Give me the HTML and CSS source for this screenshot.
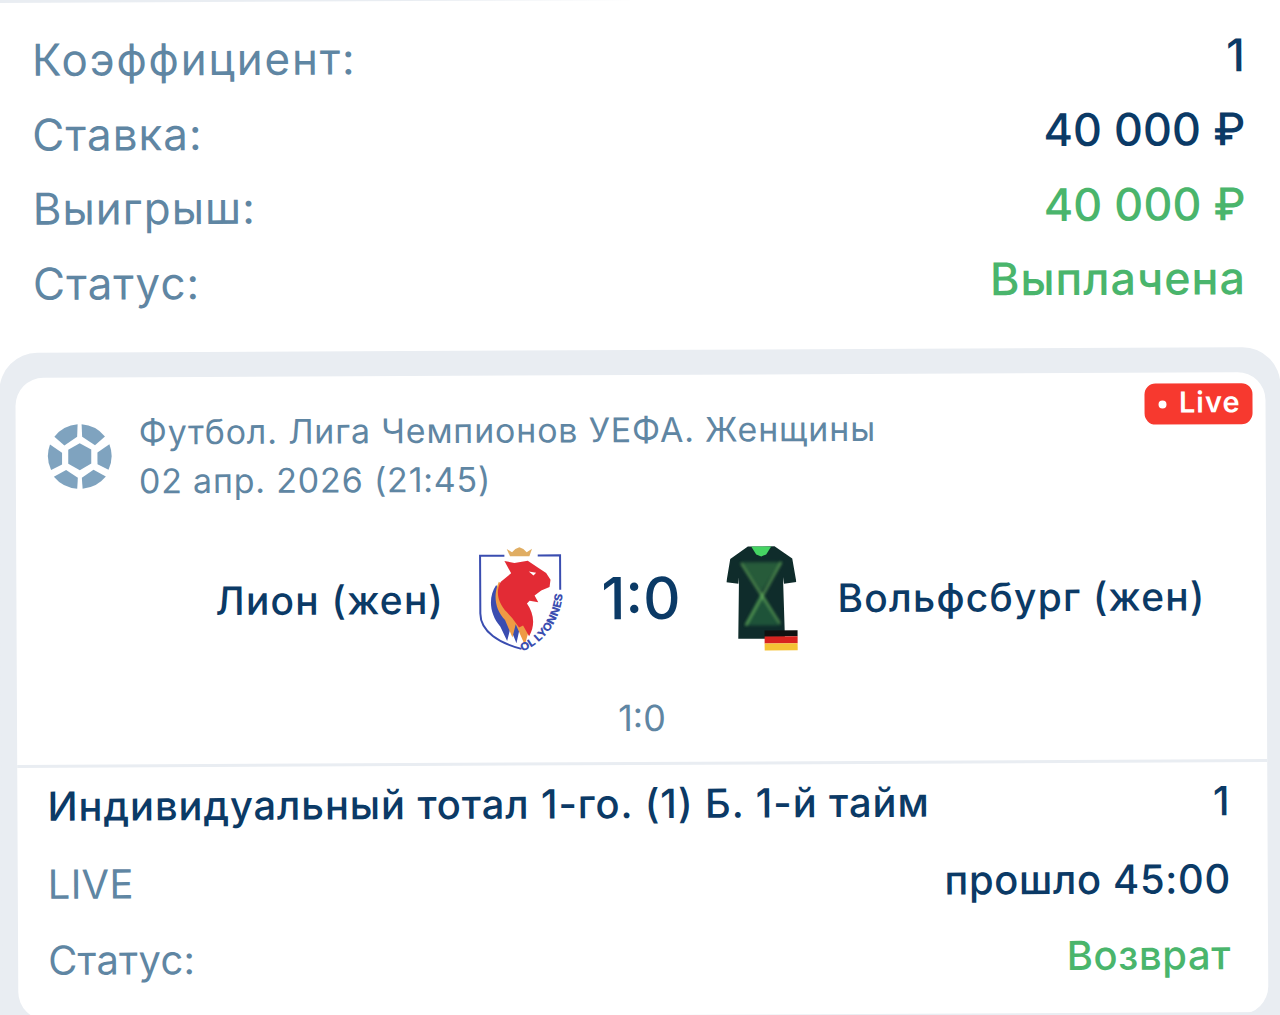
FILE: index.html
```html
<!DOCTYPE html>
<html lang="ru">
<head>
    <meta charset="UTF-8">
    <title>Купон</title>
    <link rel="stylesheet" href="styles.css">
</head>
<body>

    <div class="page">
        <!-- Summary -->
        <section class="summary">
            <div class="summary-row"><span class="summary-label wide">Коэффициент:</span><span class="summary-value">1</span></div>
            <div class="summary-row"><span class="summary-label">Ставка:</span><span class="summary-value">40 000 ₽</span></div>
            <div class="summary-row"><span class="summary-label">Выигрыш:</span><span class="summary-value green">40 000 ₽</span></div>
            <div class="summary-row"><span class="summary-label">Статус:</span><span class="summary-value green paid">Выплачена</span></div>
        </section>

        <!-- Event card -->
        <section class="card-wrap">
            <div class="card">
                <span class="live-badge"><i class="live-dot"></i>Live</span>

                <div class="event-head">
                    <svg class="sport-icon" viewBox="0 0 66 66">
                        <polygon points="33,19.500 44.500,26 44.500,40 33,46.500 21.500,40 21.500,26" fill="#7fa3bf"/>
                        <path d="M31 .7 L30.500 13 L17.700 21.700 L7.700 13 A33 33 0 0 1 31 .7 Z" fill="#7fa3bf"/>
                        <path d="M35 .7 L35.500 13 L48.300 21.700 L58.300 13 A33 33 0 0 0 35 .7 Z" fill="#7fa3bf"/>
                        <path d="M3.300 20.700 L15.300 29 L15.300 40.700 L4.300 46.300 A33 33 0 0 1 3.300 20.700 Z" fill="#7fa3bf"/>
                        <path d="M62.700 20.700 L50.700 29 L50.700 40.700 L61.700 46.300 A33 33 0 0 0 62.700 20.700 Z" fill="#7fa3bf"/>
                        <path d="M19.300 46.300 L31 54 L30.300 65 A33 33 0 0 1 7 53 Z" fill="#7fa3bf"/>
                        <path d="M46.700 46.300 L35 54 L35.700 65 A33 33 0 0 0 59 53 Z" fill="#7fa3bf"/>
                    </svg>
                    <div class="event-info">
                        <div>Футбол. Лига Чемпионов УЕФА. Женщины</div>
                        <div>02 апр. 2026 (21:45)</div>
                    </div>
                </div>

                <div class="match">
                    <div class="team team-home">Лион (жен)</div>
                    <svg class="crest" viewBox="30 25 245 315">
                        <polygon points="112,32 128,42 138,32 150,27 162,32 172,42 188,32 180,54 122,54" fill="#e0ad62"/>
                        <path d="M105 52 H32 V225 C32 280 90 315 155 332" fill="none" stroke="#3a4db0" stroke-width="6"/>
                        <path d="M205 52 H272 V155" fill="none" stroke="#3a4db0" stroke-width="6"/>
                        <path d="M80 140 C56 175 58 225 92 265 L112 308 L122 270 L140 315 L150 270 Z" fill="#3a4db0"/>
                        <path d="M88 130 C70 170 76 215 106 245 L128 298 L138 258 L165 320 L178 275 L150 180 Z" fill="#ee9a45"/>
                        <path d="M105 68 L135 74 L175 68 L205 88 L230 105 L243 125 L240 147 L215 157 L195 172 L206 192 L180 188 L172 196 C192 225 198 260 178 294 L160 262 L148 268 L128 240 L112 222 C86 195 76 160 94 130 L125 105 Z" fill="#e32b35"/>
                        <polygon points="178,100 200,104 192,112" fill="#fff"/>
                        <path id="crestCurve" d="M158 340 C228 312 276 242 280 160" fill="none"/>
                        <text class="crest-text"><textPath href="#crestCurve" textLength="222" lengthAdjust="spacingAndGlyphs">OL LYONNES</textPath></text>
                    </svg>
                    <div class="score">1:0</div>
                    <div class="shirt-box">
                        <svg class="shirt" viewBox="30 15 210 285">
                            <defs>
                                <filter id="shirtBlur"><feGaussianBlur stdDeviation="4"/></filter>
                                <clipPath id="shirtClip">
                                    <path d="M95 18 L175 18 L228 55 L240 125 L203 130 L200 110 L205 295 L65 295 L68 110 L66 130 L30 125 L42 55 Z"/>
                                </clipPath>
                            </defs>
                            <path d="M95 18 L175 18 L228 55 L240 125 L203 130 L200 110 L205 295 L65 295 L68 110 L66 130 L30 125 L42 55 Z" fill="#0f2c2b"/>
                            <g clip-path="url(#shirtClip)">
                                <polygon points="75,65 195,65 135,155" fill="#3f8a4c" opacity="0.500" filter="url(#shirtBlur)"/>
                                <polygon points="135,155 85,255 190,255" fill="#2f7a48" opacity="0.500" filter="url(#shirtBlur)"/>
                                <path d="M75 68 L190 250 M195 65 L88 255" stroke="#7fcf66" stroke-width="5" opacity="0.850" filter="url(#shirtBlur)"/>
                            </g>
                            <polygon points="105,18 165,18 150,42 135,48 120,42" fill="#45d463"/>
                        </svg>
                        <div class="flag"><span class="flag-black"></span><span class="flag-red"></span><span class="flag-gold"></span></div>
                    </div>
                    <div class="team team-away">Вольфсбург (жен)</div>
                </div>

                <div class="period-score">1:0</div>

                <div class="bet">
                    <div class="bet-row bet-first">
                        <span class="bet-title">Индивидуальный тотал 1-го. (1) Б. 1-й тайм</span>
                        <span class="bet-title">1</span>
                    </div>
                    <div class="bet-row bet-second">
                        <span class="bet-label">LIVE</span>
                        <span class="bet-time">прошло 45:00</span>
                    </div>
                    <div class="bet-row bet-third">
                        <span class="bet-label">Статус:</span>
                        <span class="bet-status">Возврат</span>
                    </div>
                </div>
            </div>
        </section>
    </div>

</body>
</html>
```

FILE: styles.css
```css
/* Base Reset */
* {
    margin: 0;
    padding: 0;
    box-sizing: border-box;
    font-family: 'Inter', 'Noto Sans', sans-serif;
}

body {
    background-color: #e9edf2;
    width: 1280px;
    height: 1015px;
    overflow: hidden;
}

/* The shot is a slightly tilted phone photo */
.page {
    background: linear-gradient(#fff 400px, #e9edf2 400px);
    margin: 0 -8px;
    height: 1015px;
    transform: rotate(-0.27deg);
}

/* Summary */
.summary {
    padding: 20px 41px 0 42px;
    height: 350px;
}

.summary-row {
    display: flex;
    justify-content: space-between;
    align-items: center;
    height: 74.500px;
}

.summary-label {
    font-size: 44px;
    letter-spacing: 1px;
    color: #5f86a3;
}

.summary-label.wide {
    letter-spacing: 1.800px;
}

.summary-value {
    font-size: 45px;
    font-weight: 500;
    color: #0b3a66;
}

.summary-value.green {
    color: #4ab56c;
}

.summary-value.paid {
    letter-spacing: 0.900px;
}

/* Event card */
.card-wrap {
    background-color: #e9edf2;
    border-radius: 38px 38px 0 0;
    margin: 0 7px 0 8px;
    padding: 25px 15px 0 16px;
    height: 665px;
    overflow: hidden;
}

.card {
    position: relative;
    background-color: #fff;
    border-radius: 28px;
    height: 642px;
}

.live-badge {
    position: absolute;
    top: 11px;
    right: 13px;
    display: flex;
    align-items: center;
    background-color: #f7392f;
    color: #fff;
    font-size: 29px;
    font-weight: 600;
    letter-spacing: 1px;
    line-height: 37px;
    padding: 0 12px 4px 14px;
    border-radius: 11px;
}

.live-dot {
    width: 8px;
    height: 8px;
    margin: 4px 12px 0 0;
    border-radius: 50%;
    background-color: #fff;
}

.event-head {
    display: flex;
    align-items: center;
    gap: 26px;
    padding: 30px 0 0 31px;
}

.sport-icon {
    width: 66px;
    height: 66px;
}

.event-info {
    font-size: 34px;
    letter-spacing: 0.800px;
    line-height: 49px;
    color: #5f86a3;
}

/* Match */
.match {
    display: flex;
    align-items: center;
    margin-top: 40px;
    height: 110px;
}

.team {
    font-size: 39px;
    font-weight: 500;
    letter-spacing: 1.200px;
    color: #0b3a66;
    white-space: nowrap;
}

.team-home {
    margin-left: 199px;
    width: 264px;
}

.crest {
    width: 82px;
    height: 105px;
    overflow: visible;
}

.crest-text {
    font-size: 33px;
    font-weight: 800;
    fill: #3a4db0;
}

.score {
    font-size: 58px;
    font-weight: 500;
    color: #0b3a66;
    margin-left: 40px;
    width: 125px;
}

.shirt-box {
    position: relative;
    width: 70px;
    height: 95px;
    margin-bottom: 10px;
}

.shirt {
    width: 70px;
    height: 95px;
}

.flag {
    position: absolute;
    right: -1px;
    bottom: -10px;
    width: 33px;
    height: 20px;
    display: flex;
    flex-direction: column;
}

.flag span {
    flex: 1;
}

.flag-black {
    background-color: #111;
}

.flag-red {
    background-color: #d8231f;
}

.flag-gold {
    background-color: #f5c234;
}

.team-away {
    margin-left: 41px;
}

.period-score {
    text-align: center;
    font-size: 36px;
    color: #5f86a3;
    margin-top: 31px;
    height: 81px;
    line-height: 69px;
    border-bottom: 3px solid #e9edf2;
}

/* Bet details */
.bet {
    padding: 0 37px 0 30px;
}

.bet-row {
    display: flex;
    justify-content: space-between;
    align-items: center;
}

.bet-first {
    height: 77px;
}

.bet-second {
    height: 78px;
}

.bet-third {
    height: 75px;
}

.bet-title {
    font-size: 40px;
    font-weight: 500;
    letter-spacing: 0.850px;
    color: #0b3a66;
}

.bet-label {
    font-size: 40px;
    letter-spacing: 0.200px;
    color: #5f86a3;
}

.bet-time {
    font-size: 40px;
    font-weight: 500;
    letter-spacing: 0.600px;
    color: #0b3a66;
}

.bet-status {
    font-size: 40px;
    font-weight: 500;
    letter-spacing: 0.600px;
    color: #4ab56c;
}
```
